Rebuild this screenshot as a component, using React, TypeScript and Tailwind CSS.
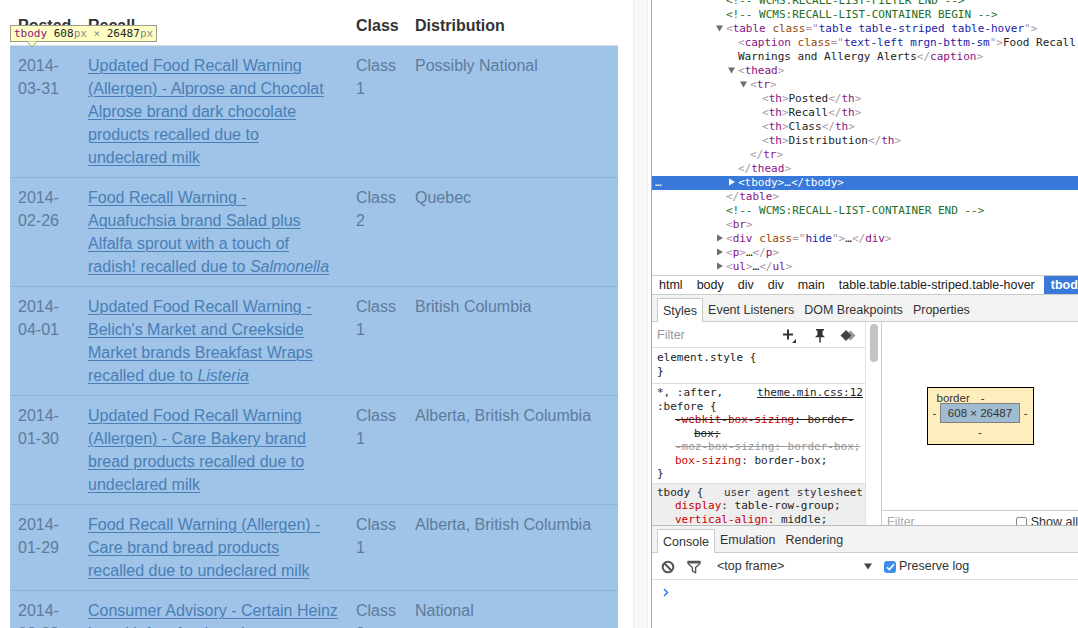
import React from "react";

const mono = "font-['DejaVu_Sans_Mono',monospace]";
const ui = "font-['Liberation_Sans',Arial,sans-serif]";

// --- page side -------------------------------------------------------------

type Recall = { date: [string, string]; lines: React.ReactNode[]; cls: string; dist: string };

const recalls: Recall[] = [
  {
    date: ["2014-", "03-31"],
    lines: [
      "Updated Food Recall Warning",
      "(Allergen) - Alprose and Chocolat",
      "Alprose brand dark chocolate",
      "products recalled due to",
      "undeclared milk",
    ],
    cls: "1",
    dist: "Possibly National",
  },
  {
    date: ["2014-", "02-26"],
    lines: [
      "Food Recall Warning -",
      "Aquafuchsia brand Salad plus",
      "Alfalfa sprout with a touch of",
      <>radish! recalled due to <i>Salmonella</i></>,
    ],
    cls: "2",
    dist: "Quebec",
  },
  {
    date: ["2014-", "04-01"],
    lines: [
      "Updated Food Recall Warning -",
      "Belich's Market and Creekside",
      "Market brands Breakfast Wraps",
      <>recalled due to <i>Listeria</i></>,
    ],
    cls: "1",
    dist: "British Columbia",
  },
  {
    date: ["2014-", "01-30"],
    lines: [
      "Updated Food Recall Warning",
      "(Allergen) - Care Bakery brand",
      "bread products recalled due to",
      "undeclared milk",
    ],
    cls: "1",
    dist: "Alberta, British Columbia",
  },
  {
    date: ["2014-", "01-29"],
    lines: [
      "Food Recall Warning (Allergen) -",
      "Care brand bread products",
      "recalled due to undeclared milk",
    ],
    cls: "1",
    dist: "Alberta, British Columbia",
  },
  {
    date: ["2014-", "02-28"],
    lines: ["Consumer Advisory - Certain Heinz", "brand infant food products"],
    cls: "2",
    dist: "National",
  },
];

function Page() {
  return (
    <div className={`relative w-[633px] h-full pl-[10px] pt-[6px] bg-white ${ui} text-[16px] text-[#333]`}>
      {/* thead */}
      <div className="grid grid-cols-[70px_268px_59px_211px] w-[608px] border-b border-[#dddddd] font-bold leading-[23px]">
        <div className="p-2">Posted</div>
        <div className="p-2">Recall</div>
        <div className="p-2">Class</div>
        <div className="p-2">Distribution</div>
      </div>

      {/* tbody, highlighted */}
      <div className="w-[608px] bg-[#9fc4e8] text-[#5e7b9b] leading-[23px]">
        {recalls.map((r, i) => (
          <div
            key={i}
            className={`grid grid-cols-[70px_268px_59px_211px] ${i === 0 ? "" : "border-t border-[#8db3d9]"}`}
          >
            <div className="p-2">
              <div>{r.date[0]}</div>
              <div>{r.date[1]}</div>
            </div>
            <div className="p-2 text-[#4a7eb6] underline decoration-1 underline-offset-[2px]">
              {r.lines.map((l, j) => (
                <div key={j} className="whitespace-nowrap">{l}</div>
              ))}
            </div>
            <div className="p-2">
              <div>Class</div>
              <div>{r.cls}</div>
            </div>
            <div className="p-2 whitespace-nowrap">{r.dist}</div>
          </div>
        ))}
      </div>

      {/* inspect tooltip */}
      <div className={`absolute left-[10px] top-[25px] h-[17px] px-[3px] bg-[#ffffc4] border border-[#9b9b8a] ${mono} text-[11px] leading-[15px] whitespace-nowrap text-[#222]`}>
        <span className="text-[#881280]">tbody</span> 608<span className="text-[#888]">px</span>
        <span className="text-[#888]"> × </span>26487<span className="text-[#888]">px</span>
        <svg className="absolute left-[16px] top-[15px]" width="10" height="7" viewBox="0 0 10 7">
          <path d="M0 0.5L5 6 10 0.5" fill="#ffffc4" stroke="#9b9b8a" strokeWidth="1" />
        </svg>
      </div>
    </div>
  );
}

// --- devtools: elements tree ---------------------------------------------

const B = ({ c }: { c: string }) => <span className="text-[#a894a6]">{c}</span>;
const N = ({ c }: { c: string }) => <span className="text-[#881280]">{c}</span>;
const A = ({ c }: { c: string }) => <span className="text-[#994500]">{c}</span>;
const V = ({ c }: { c: string }) => <span className="text-[#1a1aa6]">{c}</span>;
const C = ({ c }: { c: string }) => <span className="text-[#236e25]">{c}</span>;

const pads = ["pl-[74px]", "pl-[86px]", "pl-[98px]", "pl-[110px]"];

function Arrow({ dir, color = "#6e6e6e" }: { dir: "down" | "right"; color?: string }) {
  return (
    <span className="inline-block w-[7px] ml-[-10px] mr-[3px] align-[0px]">
      <svg width="7" height="8" viewBox="0 0 7 8">
        {dir === "down" ? <path d="M0 1.5h7L3.5 7.5z" fill={color} /> : <path d="M1 0.5v7l6-3.5z" fill={color} />}
      </svg>
    </span>
  );
}

type Node = { level: number; arrow?: "down" | "right"; body: React.ReactNode };

const tree: Node[] = [
  { level: 0, body: <C c="<!-- WCMS:RECALL-LIST-FILTER END -->" /> },
  { level: 0, body: <C c="<!-- WCMS:RECALL-LIST-CONTAINER BEGIN -->" /> },
  {
    level: 0,
    arrow: "down",
    body: (
      <>
        <B c="<" /><N c="table" /> <A c="class" /><B c={'="'} /><V c="table table-striped table-hover" /><B c={'">'} />
      </>
    ),
  },
  {
    level: 1,
    body: (
      <>
        <B c="<" /><N c="caption" /> <A c="class" /><B c={'="'} /><V c="text-left mrgn-bttm-sm" /><B c={'">'} />Food Recall
      </>
    ),
  },
  { level: 1, body: <>Warnings and Allergy Alerts<B c="</" /><N c="caption" /><B c=">" /></> },
  { level: 1, arrow: "down", body: <><B c="<" /><N c="thead" /><B c=">" /></> },
  { level: 2, arrow: "down", body: <><B c="<" /><N c="tr" /><B c=">" /></> },
  { level: 3, body: <><B c="<" /><N c="th" /><B c=">" />Posted<B c="</" /><N c="th" /><B c=">" /></> },
  { level: 3, body: <><B c="<" /><N c="th" /><B c=">" />Recall<B c="</" /><N c="th" /><B c=">" /></> },
  { level: 3, body: <><B c="<" /><N c="th" /><B c=">" />Class<B c="</" /><N c="th" /><B c=">" /></> },
  { level: 3, body: <><B c="<" /><N c="th" /><B c=">" />Distribution<B c="</" /><N c="th" /><B c=">" /></> },
  { level: 2, body: <><B c="</" /><N c="tr" /><B c=">" /></> },
  { level: 1, body: <><B c="</" /><N c="thead" /><B c=">" /></> },
  { level: -1, body: null },
  { level: 0, body: <><B c="</" /><N c="table" /><B c=">" /></> },
  { level: 0, body: <C c="<!-- WCMS:RECALL-LIST-CONTAINER END -->" /> },
  { level: 0, body: <><B c="<" /><N c="br" /><B c=">" /></> },
  {
    level: 0,
    arrow: "right",
    body: (
      <>
        <B c="<" /><N c="div" /> <A c="class" /><B c={'="'} /><V c="hide" /><B c={'">'} />…<B c="</" /><N c="div" /><B c=">" />
      </>
    ),
  },
  { level: 0, arrow: "right", body: <><B c="<" /><N c="p" /><B c=">" />…<B c="</" /><N c="p" /><B c=">" /></> },
  { level: 0, arrow: "right", body: <><B c="<" /><N c="ul" /><B c=">" />…<B c="</" /><N c="ul" /><B c=">" /></> },
];

function ElementsTree() {
  return (
    <div className={`h-[276px] overflow-hidden border-b border-[#cccccc] ${mono} text-[11px] text-[#222]`}>
      <div className="mt-[-6px]">
        {tree.map((n, i) =>
          n.level === -1 ? (
            <div key={i} className="relative h-[14px] leading-[14px] whitespace-nowrap pl-[86px] bg-[#3879d9] text-white">
              <span className="absolute left-[3px] top-0">…</span>
              <Arrow dir="right" color="#ffffff" />
              &lt;tbody&gt;…&lt;/tbody&gt;
            </div>
          ) : (
            <div key={i} className={`h-[14px] leading-[14px] whitespace-nowrap ${pads[n.level]}`}>
              {n.arrow && <Arrow dir={n.arrow} />}
              {n.body}
            </div>
          )
        )}
      </div>
    </div>
  );
}

// --- devtools: styles / metrics -------------------------------------------

function FilterIcons() {
  return (
    <div className="flex items-center">
      <svg width="16" height="16" viewBox="0 0 16 16">
        <path d="M6 1.5v10M1 6.5h10" stroke="#333" strokeWidth="2" />
        <path d="M14 11v4h-4z" fill="#333" />
      </svg>
      <svg className="ml-[16px]" width="12" height="15" viewBox="0 0 12 15">
        <path d="M2 1h8v1.6H8.6v4.2L11 9.2H1l2.4-2.4V2.6H2z" fill="#333" />
        <rect x="5.3" y="9" width="1.5" height="5.5" fill="#333" />
      </svg>
      <svg className="ml-[14px]" width="17" height="13" viewBox="0 0 17 13">
        <path d="M10.5 1.5L15.5 6.5 10.5 11.5 5.5 6.5z" fill="#999" />
        <path d="M6 1L11.5 6.5 6 12 0.5 6.5z" fill="#444" />
      </svg>
    </div>
  );
}

function Prop({ name, value, strike, gray }: { name: string; value: string; strike?: boolean; gray?: boolean }) {
  return (
    <div className={`pl-[18px] whitespace-nowrap ${strike ? "line-through" : ""} ${gray ? "text-[#9a9a9a]" : ""}`}>
      <span className={gray ? "" : "text-[#c80000]"}>{name}</span>: {value}
    </div>
  );
}

function StylesPane() {
  return (
    <div className="flex w-[229px] h-full">
      <div className={`w-[214px] h-full border-r border-[#e3e3e3] ${mono} text-[11px] text-[#222]`}>
        <div className={`h-[26px] flex items-center justify-between pl-[5px] pr-[8px] pt-[2px] border-b border-[#dddddd] ${ui} text-[12.5px] text-[#999]`}>
          <span>Filter</span>
          <FilterIcons />
        </div>

        <div className="pl-[5px] pt-[3px] pb-[5px] leading-[13.5px] border-b border-[#dddddd]">
          <div>element.style {"{"}</div>
          <div>{"}"}</div>
        </div>

        <div className="pl-[5px] pr-[2px] pt-[2px] pb-[2px] leading-[13.5px] border-b border-[#dddddd]">
          <div className="flex justify-between whitespace-nowrap">
            <span>*, :after,</span>
            <span className="underline">theme.min.css:12</span>
          </div>
          <div>:before {"{"}</div>
          <div className="pl-[18px] whitespace-nowrap line-through">
            <span className="text-[#c80000]">-webkit-box-sizing</span>: border-
          </div>
          <div className="pl-[37px] line-through">box;</div>
          <Prop name="-moz-box-sizing" value="border-box;" strike gray />
          <Prop name="box-sizing" value="border-box;" />
          <div>{"}"}</div>
        </div>

        <div className="pl-[5px] pr-[2px] pt-[2px] leading-[13.5px] bg-[#eeeeee] h-[60px]">
          <div className="flex justify-between whitespace-nowrap">
            <span>tbody {"{"}</span>
            <span className="text-[#333]">user agent stylesheet</span>
          </div>
          <Prop name="display" value="table-row-group;" />
          <Prop name="vertical-align" value="middle;" />
        </div>
      </div>
      {/* scrollbar gutter */}
      <div className="w-[15px] h-full pt-[2px] flex justify-center">
        <div className="w-[8px] h-[38px] rounded-[4px] bg-[#c3c3c3]" />
      </div>
    </div>
  );
}

function MetricsPane() {
  return (
    <div className={`flex-1 h-full flex flex-col border-l border-[#cccccc] ${ui} text-[#333]`}>
      <div className="flex-1 flex items-center justify-center">
        <div className="w-[107px] h-[58px] bg-[#feedbd] border border-black flex flex-col items-center text-[11.5px] leading-[12px]">
          <div className="w-full flex pl-[9px] pt-[4px] h-[15px]">
            <span>border</span>
            <span className="ml-[11px]">-</span>
          </div>
          <div className="w-full flex items-center justify-between px-[5px]">
            <span>-</span>
            <div className="w-[80px] h-[20px] bg-[#9fbcd0] border border-[#808080] flex items-center justify-center">
              608 × 26487
            </div>
            <span>-</span>
          </div>
          <div className="pt-[3px]">-</div>
        </div>
      </div>
      <div className="h-[15px] overflow-hidden border-t border-[#cccccc] flex items-start justify-between pl-[5px] text-[12.5px] leading-[22px]">
        <span className="text-[#aaa]">Filter</span>
        <span className="flex items-center pt-[5px] leading-[13px]">
          <span className="w-[11px] h-[11px] border border-[#888] rounded-[2px] bg-white mr-[4px]" />
          <span>Show all</span>
        </span>
      </div>
    </div>
  );
}

// --- devtools: console drawer ---------------------------------------------

function ConsoleDrawer() {
  return (
    <div className={`flex-1 border-t border-[#bbbbbb] ${ui} text-[12.5px] text-[#333]`}>
      <div className="h-[27px] bg-[#f3f3f3] border-b border-[#cccccc] flex items-end pl-[5px]">
        <div className="h-[24px] px-[5px] pt-[1px] bg-white border-x border-t border-[#cccccc] flex items-center mb-[-1px]">Console</div>
        <div className="h-[24px] px-[5px] pt-[1px] flex items-center">Emulation</div>
        <div className="h-[24px] px-[5px] pt-[1px] flex items-center">Rendering</div>
      </div>
      <div className="h-[27px] border-b border-[#dddddd] flex items-center pl-[9px] pt-[1px]">
        <svg width="14" height="14" viewBox="0 0 14 14">
          <circle cx="7" cy="7" r="5.3" fill="none" stroke="#555" strokeWidth="2" />
          <path d="M3.3 3.3l7.4 7.4" stroke="#555" strokeWidth="2" />
        </svg>
        <svg className="ml-[12px]" width="14" height="14" viewBox="0 0 14 14">
          <path d="M1 1.5h12v2L8.6 7.6v5.2L5.4 11V7.6L1 3.5z" fill="none" stroke="#555" strokeWidth="1.4" strokeLinejoin="round" />
          <path d="M1 1.5h12v2H1z" fill="#555" />
        </svg>
        <div className="ml-[16px] w-[155px] flex items-center justify-between">
          <span>&lt;top frame&gt;</span>
          <svg width="8" height="7" viewBox="0 0 8 7">
            <path d="M0 0.5h8L4 6.5z" fill="#444" />
          </svg>
        </div>
        <span className="ml-[12px] w-[12px] h-[12px] rounded-[3px] bg-[#3d8ee9] flex items-center justify-center">
          <svg width="9" height="8" viewBox="0 0 9 8">
            <path d="M1 4.2l2.4 2.4L8 1.2" fill="none" stroke="#fff" strokeWidth="1.6" />
          </svg>
        </span>
        <span className="ml-[3px]">Preserve log</span>
      </div>
      <div className="pl-[11px] pt-[8px]">
        <svg width="6" height="9" viewBox="0 0 6 9">
          <path d="M1 1l3.5 3.5L1 8" fill="none" stroke="#367cf1" strokeWidth="1.6" />
        </svg>
      </div>
    </div>
  );
}

function DevTools() {
  return (
    <div className="w-[427px] h-full flex flex-col bg-white border-l border-[#a5a5a5] overflow-hidden">
      <ElementsTree />

      {/* breadcrumbs */}
      <div className={`h-[19px] flex items-center border-b border-[#cccccc] ${ui} text-[12.5px] text-[#222] whitespace-nowrap`}>
        <span className="px-[7px]">html</span>
        <span className="px-[7px]">body</span>
        <span className="px-[7px]">div</span>
        <span className="px-[7px]">div</span>
        <span className="px-[7px]">main</span>
        <span className="px-[7px]">table.table.table-striped.table-hover</span>
        <span className="h-full ml-[2px] px-[7px] bg-[#3879d9] text-white font-bold flex items-center">tbody</span>
      </div>

      {/* sidebar tabs */}
      <div className={`h-[27px] bg-[#f3f3f3] border-b border-[#cccccc] flex items-end pl-[5px] ${ui} text-[12.5px] text-[#333] whitespace-nowrap`}>
        <div className="h-[24px] px-[5px] pt-[2px] bg-white border-x border-t border-[#cccccc] flex items-center mb-[-1px]">Styles</div>
        <div className="h-[24px] px-[5px] pt-[2px] flex items-center">Event Listeners</div>
        <div className="h-[24px] px-[5px] pt-[2px] flex items-center">DOM Breakpoints</div>
        <div className="h-[24px] px-[5px] pt-[2px] flex items-center">Properties</div>
      </div>

      <div className="h-[203px] flex overflow-hidden">
        <StylesPane />
        <MetricsPane />
      </div>

      <ConsoleDrawer />
    </div>
  );
}

export default function App() {
  return (
    <div className="w-[1078px] h-[628px] flex overflow-hidden bg-white">
      <div className="w-[651px] h-full flex">
        <Page />
        <div className="w-[15px] h-full bg-[#f8f8f8] border-l border-[#e8e8e8] border-r border-[#efefef]" />
        <div className="w-[3px] h-full bg-white" />
      </div>
      <DevTools />
    </div>
  );
}
